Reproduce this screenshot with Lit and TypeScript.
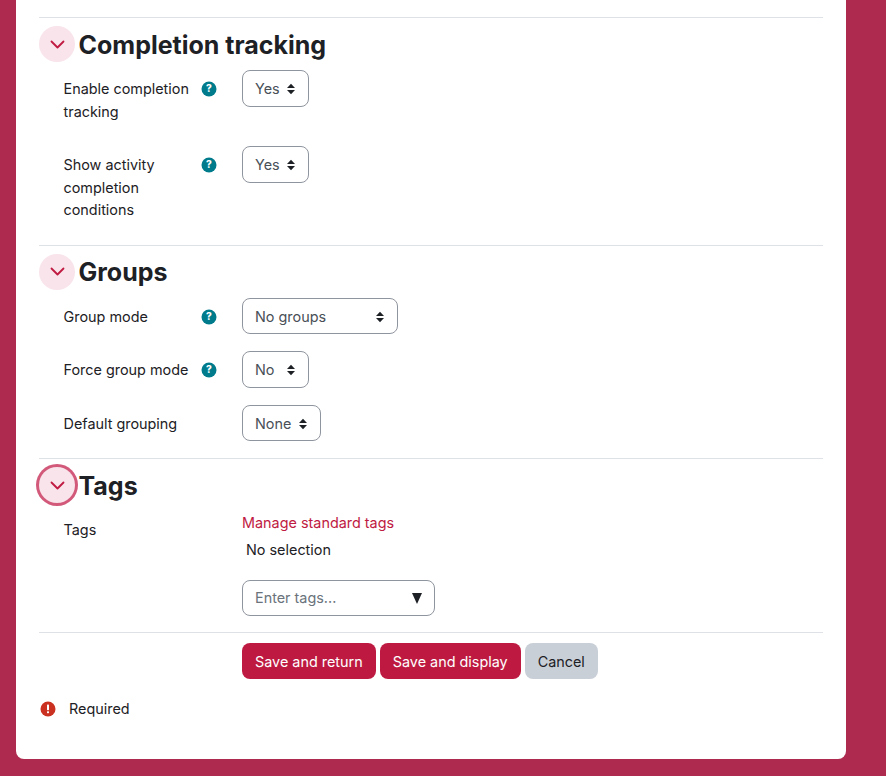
import { LitElement, html, css, svg } from "lit";
import { customElement } from "lit/decorators.js";

const updown = html`<svg class="updown" width="10" height="12" viewBox="0 0 10 12"><path d="M5 .8 9 5H1z M5 11.2 1 7h8z" fill="#1d2125"/></svg>`;
const help = html`<span class="help"><svg width="16" height="16" viewBox="0 0 16 16"><circle cx="8" cy="8" r="7.5" fill="#007b8c"/><text x="8" y="11.4" text-anchor="middle" font-size="10" font-weight="800" fill="#fff" font-family="Inter, sans-serif">?</text></svg></span>`;
const chevron = svg`<path d="M1.5 1.5 7.5 7.5l6-6" fill="none" stroke="#c01a42" stroke-width="1.8" stroke-linecap="round" stroke-linejoin="round"/>`;

@customElement("app-root")
export class AppRoot extends LitElement {
  static styles = css`
    :host {
      display: block;
      min-height: 776px;
      box-sizing: border-box;
      background: #ae2a4f;
      padding: 0 40px 17px 16px;
      font-family: Inter, "Liberation Sans", sans-serif;
      font-size: 14.4px;
      line-height: 22.5px;
      color: #1d2125;
    }
    .card {
      background: #fff;
      border-radius: 0 0 8px 8px;
      padding: 17px 23px 39px;
      height: 759px;
      box-sizing: border-box;
    }
    .section {
      border-top: 1px solid #dee2e6;
      padding-top: 8px;
    }
    .head {
      display: flex;
      align-items: center;
      gap: 3.5px;
      height: 36px;
      margin-bottom: 8px;
    }
    .toggle {
      width: 36px;
      height: 36px;
      border-radius: 50%;
      background: #f8e4ea;
      display: flex;
      align-items: center;
      justify-content: center;
      flex: none;
    }
    .toggle.focus {
      box-shadow: 0 0 0 3px #d2597a;
    }
    h3 {
      margin: 0;
      padding-top: 1.5px;
      font-size: 25px;
      line-height: 36px;
      font-weight: 700;
    }
    .row {
      display: flex;
      margin-bottom: 16px;
      padding-left: 24.5px;
    }
    .label {
      width: 178.5px;
      flex: none;
      display: flex;
      box-sizing: border-box;
      padding: 8px 0 7px;
    }
    .label span.t {
      width: 137.5px;
      flex: none;
    }
    .help {
      display: flex;
      height: 22.5px;
      align-items: center;
    }
    .select {
      display: flex;
      align-items: center;
      justify-content: space-between;
      box-sizing: border-box;
      height: 36.5px;
      margin-bottom: 1px;
      border: 1px solid #8f959e;
      border-radius: 8px;
      padding: 2px 12px 0;
      color: #495057;
      background: #fff;
    }
    .ctrl {
      flex: 1;
      min-width: 0;
    }
    .link {
      color: #c01a42;
      padding-top: 1px;
      margin-bottom: -1px;
    }
    .none {
      padding: 5px 4px 0;
      margin-bottom: 19px;
    }
    .select.input {
      width: 193px;
      height: 36px;
      color: #6a737b;
      margin-bottom: 0;
      padding-top: 1px;
    }
    .tri {
      width: 0;
      height: 0;
      border-left: 5.5px solid transparent;
      border-right: 5.5px solid transparent;
      border-top: 11px solid #1d2125;
    }
    .actions {
      border-top: 1px solid #dee2e6;
      padding: 10px 0 0 203px;
      display: flex;
      gap: 4px;
    }
    .btn {
      height: 36px;
      padding: 2px 13px 0;
      box-sizing: border-box;
      border-radius: 8px;
      background: #be1a41;
      color: #fff;
      display: flex;
      align-items: center;
    }
    .btn.cancel {
      background: #c9cfd7;
      color: #1d2125;
    }
    .required {
      display: flex;
      align-items: center;
      gap: 13px;
      margin-top: 18px;
      padding-left: 1px;
    }
    .required span {
      padding-top: 1px;
    }
  `;

  private sel(text: string, width: number) {
    return html`<div class="select" style="width:${width}px">${text}${updown}</div>`;
  }

  private row(label: string, value: string, width: number, hasHelp = true) {
    return html`<div class="row">
      <div class="label"><span class="t">${label}</span>${hasHelp ? help : ""}</div>
      <div class="ctrl">${this.sel(value, width)}</div>
    </div>`;
  }

  private head(title: string, focus = false) {
    return html`<div class="head">
      <div class="toggle ${focus ? "focus" : ""}"><svg width="15" height="9" viewBox="0 0 15 9">${chevron}</svg></div>
      <h3>${title}</h3>
    </div>`;
  }

  render() {
    return html`<div class="card">
      <div class="section">
        ${this.head("Completion tracking")}
        ${this.row("Enable completion tracking", "Yes", 67)}
        ${this.row("Show activity completion conditions", "Yes", 67)}
      </div>
      <div class="section">
        ${this.head("Groups")}
        ${this.row("Group mode", "No groups", 156)}
        ${this.row("Force group mode", "No", 67)}
        ${this.row("Default grouping", "None", 79, false)}
      </div>
      <div class="section">
        ${this.head("Tags", true)}
        <div class="row">
          <div class="label"><span class="t">Tags</span></div>
          <div class="ctrl">
            <div class="link">Manage standard tags</div>
            <div class="none">No selection</div>
            <div class="select input">Enter tags...<span class="tri"></span></div>
          </div>
        </div>
      </div>
      <div class="actions">
        <div class="btn">Save and return</div>
        <div class="btn">Save and display</div>
        <div class="btn cancel">Cancel</div>
      </div>
      <div class="required">
        <svg width="16" height="16" viewBox="0 0 16 16"><circle cx="8" cy="8" r="7.5" fill="#ca3120"/><rect x="7" y="3.6" width="2" height="5.6" rx=".6" fill="#fff"/><rect x="7" y="10.2" width="2" height="2" rx=".6" fill="#fff"/></svg>
        <span>Required</span>
      </div>
    </div>`;
  }
}
